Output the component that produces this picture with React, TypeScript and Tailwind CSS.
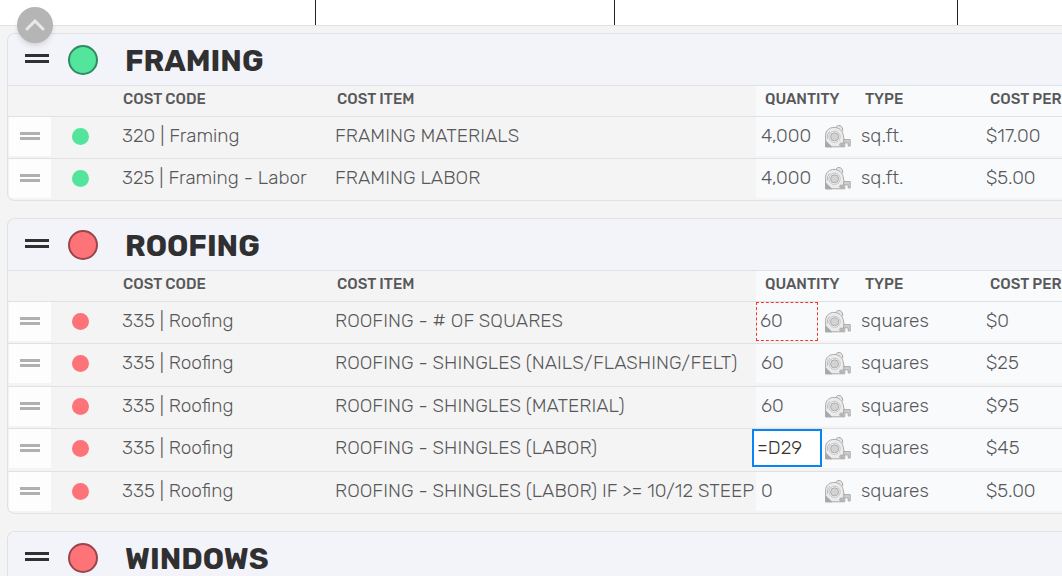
import React, { useState } from "react";
import clsx from "clsx";

type Status = "green" | "red";

type CostRow = {
  code: string;
  item: string;
  quantity: string;
  type: string;
  cost: string;
  state?: "referenced" | "editing";
};

type Group = {
  name: string;
  status: Status;
  rows: CostRow[];
};

const GROUPS: Group[] = [
  {
    name: "FRAMING",
    status: "green",
    rows: [
      { code: "320 | Framing", item: "FRAMING MATERIALS", quantity: "4,000", type: "sq.ft.", cost: "$17.00" },
      { code: "325 | Framing - Labor", item: "FRAMING LABOR", quantity: "4,000", type: "sq.ft.", cost: "$5.00" },
    ],
  },
  {
    name: "ROOFING",
    status: "red",
    rows: [
      { code: "335 | Roofing", item: "ROOFING - # OF SQUARES", quantity: "60", type: "squares", cost: "$0", state: "referenced" },
      { code: "335 | Roofing", item: "ROOFING - SHINGLES (NAILS/FLASHING/FELT)", quantity: "60", type: "squares", cost: "$25" },
      { code: "335 | Roofing", item: "ROOFING - SHINGLES (MATERIAL)", quantity: "60", type: "squares", cost: "$95" },
      { code: "335 | Roofing", item: "ROOFING - SHINGLES (LABOR)", quantity: "=D29", type: "squares", cost: "$45", state: "editing" },
      { code: "335 | Roofing", item: "ROOFING - SHINGLES (LABOR) IF >= 10/12 STEEP", quantity: "0", type: "squares", cost: "$5.00" },
    ],
  },
  { name: "WINDOWS", status: "red", rows: [] },
];

function TapeMeasure() {
  return (
    <svg width="26" height="24" viewBox="0 0 26 24" fill="none" stroke="#aaaaaa" strokeWidth="1" strokeLinejoin="round">
      <path d="M10.5 3.6 12.6 1.6h2.8l2 2.4.4 3" fill="#e6e6e6" />
      <path d="M.6 22.8V11.2C.6 6.6 4.4 3.4 9 3.4c5 0 8.4 3.4 9.2 7.4l1.6 8v4Z" fill="#ebebeb" />
      <path d="M.6 17 6.8 22.8H.6Z" fill="#a8a8a8" />
      <path d="M2.6 14.6a7.4 7.4 0 0 1 2-7.2" stroke="#bdbdbd" />
      <circle cx="9.6" cy="12.8" r="5.6" fill="#f6f6f6" stroke="#c4c4c4" />
      <circle cx="9.6" cy="12.8" r="4" fill="#d3d3d3" />
      <path d="M19 19.2h-3.4a1.5 1.5 0 0 0 0 2.8H19" fill="#b9b9b9" />
      <path d="M18.6 15.6h6.6v6.4h-2v-3.2h-4.6Z" fill="#cfcfcf" />
    </svg>
  );
}

function DragHandle({ large = false }: { large?: boolean }) {
  return (
    <button
      type="button"
      aria-label="Drag to reorder"
      className={clsx("flex cursor-grab flex-col", large ? "w-6 gap-[3px] pb-0.5" : "w-5 gap-[2px]")}
    >
      <span className={clsx("h-[3px] w-full", large ? "bg-[#303032]" : "bg-[#b0b0b0]")} />
      <span className={clsx("h-[3px] w-full", large ? "bg-[#303032]" : "bg-[#b0b0b0]")} />
    </button>
  );
}

function QuantityInput({ row }: { row: CostRow }) {
  const [value, setValue] = useState(row.quantity);

  return (
    <input
      aria-label={`Quantity, ${row.item}`}
      value={value}
      onChange={(e) => setValue(e.target.value)}
      className={clsx(
        "shrink-0 pb-0.5 outline-none",
        row.state === "editing" && "relative z-10 -mx-1 h-[38px] w-[70px] border-2 border-[#0a84f5] bg-white px-[3px] text-[#333]",
        row.state === "referenced" && "h-[39px] w-[62px] border border-dashed border-[#f5362b] px-[3px]",
        !row.state && "h-[39px] w-[62px] px-[5px]"
      )}
    />
  );
}

function Row({ row, status }: { row: CostRow; status: Status }) {
  const [cost, setCost] = useState(row.cost);

  return (
    <tr className="h-[42px] border-b border-[#e0e1e5] align-top last:border-b-0 even:not-last:h-[43px]">
      <td>
        <div className="ml-px flex h-[39px] items-center bg-[#fdfdfd] pl-[11px]">
          <DragHandle />
        </div>
      </td>
      <td>
        <div className="flex h-[39px] items-center pl-[21px]">
          <span className={clsx("size-[17px] rounded-full", status === "green" ? "bg-[#53e59b]" : "bg-[#fd7378]")} />
        </div>
      </td>
      <td className="pl-2 leading-[38px] whitespace-nowrap">{row.code}</td>
      <td className="pl-2 leading-[38px] whitespace-nowrap">{row.item}</td>
      <td>
        <div className="flex h-[39px] items-center gap-[7px] bg-[#f9fafc]">
          <QuantityInput row={row} />
          <button type="button" aria-label="Measure takeoff" className="shrink-0">
            <TapeMeasure />
          </button>
        </div>
      </td>
      <td>
        <div className="h-[39px] bg-[#f9fafc] pl-2 leading-[38px]">{row.type}</div>
      </td>
      <td>
        <div className="h-[39px] bg-[#f9fafc] pl-2">
          <input
            aria-label={`Cost per, ${row.item}`}
            value={cost}
            onChange={(e) => setCost(e.target.value)}
            className="h-[38px] w-full outline-none"
          />
        </div>
      </td>
    </tr>
  );
}

function CostGroup({ group }: { group: Group }) {
  return (
    <section className="overflow-hidden rounded-l-lg border border-r-0 border-[#e0e1e5]">
      <header className="flex h-[52px] items-center border-b border-[#e0e1e5] bg-[#f3f4f9] pl-[17px]">
        <DragHandle large />
        <span
          className={clsx(
            "ml-[19px] size-[30px] rounded-full border-2",
            group.status === "green" ? "border-[#318a60] bg-[#53e59b]" : "border-[#98454b] bg-[#fd7378]"
          )}
        />
        <h2 className="ml-[27px] pt-[3px] text-[30px] font-bold text-[#303032]">{group.name}</h2>
      </header>
      {group.rows.length > 0 && (
        <table className="w-full table-fixed border-collapse">
          <colgroup>
            <col className="w-[43px]" />
            <col className="w-[63px]" />
            <col className="w-[213px]" />
            <col className="w-[429px]" />
            <col className="w-[97px]" />
            <col className="w-[125px]" />
            <col />
          </colgroup>
          <thead>
            <tr className="h-[30px] border-b border-[#e0e1e5] text-left text-[15px] leading-[26px] whitespace-nowrap text-[#58585a] [&>th]:p-0 [&>th]:align-top [&>th]:font-medium">
              <th aria-label="Reorder" />
              <th aria-label="Status" />
              <th><div className="pl-[9px]">COST CODE</div></th>
              <th><div className="pl-[10px]">COST ITEM</div></th>
              <th className="bg-[#f9fafc]"><div className="pl-[9px]">QUANTITY</div></th>
              <th className="bg-[#f9fafc]"><div className="pl-3">TYPE</div></th>
              <th className="bg-[#f9fafc]"><div className="pl-3">COST PER</div></th>
            </tr>
          </thead>
          <tbody className="text-[19px] font-light text-[#58585a]">
            {group.rows.map((row) => (
              <Row key={row.item} row={row} status={group.status} />
            ))}
          </tbody>
        </table>
      )}
    </section>
  );
}

export default function App() {
  return (
    <div className="relative h-screen overflow-hidden bg-[#f4f4f4] font-['Rubik','Roboto',sans-serif]">
      <div className="grid h-[26px] grid-cols-[316px_299px_343px_1fr] border-b border-[#e0e1e5] bg-white">
        <div className="border-r border-[#222]" />
        <div className="border-r border-[#222]" />
        <div className="border-r border-[#222]" />
        <div />
      </div>
      <main className="flex flex-col gap-[17px] pt-[7px] pl-[7px]">
        {GROUPS.map((group) => (
          <CostGroup key={group.name} group={group} />
        ))}
      </main>
      <button
        type="button"
        aria-label="Back to top"
        className="absolute top-[7px] left-[17px] flex size-9 items-center justify-center rounded-full bg-[#b5b5b5] shadow-md"
      >
        <svg width="20" height="12" viewBox="0 0 20 12" fill="none" stroke="#e9e9e9" strokeWidth="3" strokeLinecap="round">
          <path d="m2 10 8-8 8 8" />
        </svg>
      </button>
    </div>
  );
}
